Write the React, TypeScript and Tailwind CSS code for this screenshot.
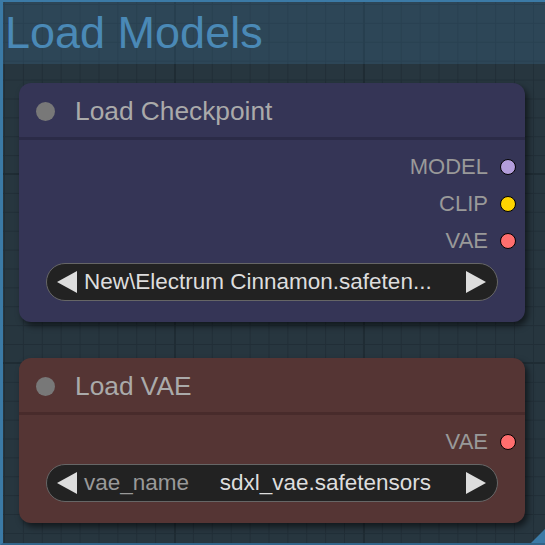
import React from "react";

type Output = { name: string; color: string };

const FONT = "font-['Liberation_Sans',Arial,sans-serif]";

function ArrowLeft() {
  return (
    <svg width="20" height="22" viewBox="0 0 20 22" className="shrink-0">
      <polygon points="20,0 20,22 0,11" fill="#dddddd" />
    </svg>
  );
}

function ArrowRight() {
  return (
    <svg width="20" height="22" viewBox="0 0 20 22" className="shrink-0">
      <polygon points="0,0 0,22 20,11" fill="#dddddd" />
    </svg>
  );
}

function ComboWidget({ label, value }: { label?: string; value: string }) {
  return (
    <div className="mx-[27px] flex h-[38px] items-center rounded-full border border-[#666666] bg-[#222222] pl-[10px] pr-[11px]">
      <ArrowLeft />
      <div className="ml-[7px] mr-[35px] flex min-w-0 flex-1 items-center justify-between whitespace-nowrap text-[22.5px] leading-none">
        {label ? <span className="text-[#999999]">{label}</span> : <span />}
        <span className="text-[#dddddd]">{value}</span>
      </div>
      <ArrowRight />
    </div>
  );
}

function Node({
  title,
  bg,
  line,
  outputs,
  widget,
}: {
  title: string;
  bg: string;
  line: string;
  outputs: Output[];
  widget: React.ReactNode;
}) {
  return (
    <div className={`${bg} ml-[16px] w-[506px] rounded-[12px] shadow-[3px_4px_6px_rgba(0,0,0,0.55)]`}>
      {/* Title bar */}
      <div className="flex h-[54px] items-center pl-[17px] pt-[3px]">
        <div className="h-[19px] w-[19px] rounded-full bg-[#787878]" />
        <span className="ml-[20px] text-[26.3px] leading-none text-[#aaaaaa]">{title}</span>
      </div>
      <div className={`h-[3px] ${line}`} />

      {/* Outputs */}
      <div className="flex flex-col pt-[8px]">
        {outputs.map((o) => (
          <div key={o.name} className="flex h-[37px] items-center justify-end pr-[9px]">
            <span className="text-[22px] leading-none text-[#999999]">{o.name}</span>
            <div
              className={`ml-[12px] h-[16px] w-[16px] rounded-full border-[1.5px] border-black ${o.color}`}
            />
          </div>
        ))}
      </div>

      <div className="pb-[21px] pt-[4px]">{widget}</div>
    </div>
  );
}

export default function App() {
  return (
    <div
      className={`${FONT} relative h-[545px] w-[545px] overflow-hidden border-b-2 border-l-[3px] border-t-2 border-[#3b7aa6] border-b-[#32658a] bg-[#27363f] [background-image:linear-gradient(to_right,#1f2c34_2px,transparent_2px),linear-gradient(to_bottom,#1f2c34_2px,transparent_2px),linear-gradient(to_right,#212e37_1px,transparent_1px),linear-gradient(to_bottom,#212e37_1px,transparent_1px)] [background-position:171px_171px,171px_171px,1px_2px,1px_2px] [background-size:189px_189px,189px_189px,18.9px_18.9px,18.9px_18.9px]`}
    >
      {/* Group header */}
      <div className="h-[62px] bg-[#3f789e]/25 pl-[2px] pt-[8px]">
        <span className="text-[45px] leading-none text-[#4a89b6]">Load Models</span>
      </div>

      <div className="flex flex-col gap-[36px] pt-[19px]">
        <Node
          title="Load Checkpoint"
          bg="bg-[#353556]"
          line="bg-[#2b2b47]"
          outputs={[
            { name: "MODEL", color: "bg-[#b39ddb]" },
            { name: "CLIP", color: "bg-[#ffd500]" },
            { name: "VAE", color: "bg-[#ff6e6e]" },
          ]}
          widget={<ComboWidget value="New\Electrum Cinnamon.safeten..." />}
        />
        <Node
          title="Load VAE"
          bg="bg-[#553534]"
          line="bg-[#482b2b]"
          outputs={[{ name: "VAE", color: "bg-[#ff6e6e]" }]}
          widget={<ComboWidget label="vae_name" value="sdxl_vae.safetensors" />}
        />
      </div>

      {/* Group resize handle */}
      <svg width="14" height="14" viewBox="0 0 14 14" className="absolute bottom-0 right-0">
        <polygon points="14,0 14,14 0,14" fill="#3b7aa6" />
      </svg>
    </div>
  );
}
